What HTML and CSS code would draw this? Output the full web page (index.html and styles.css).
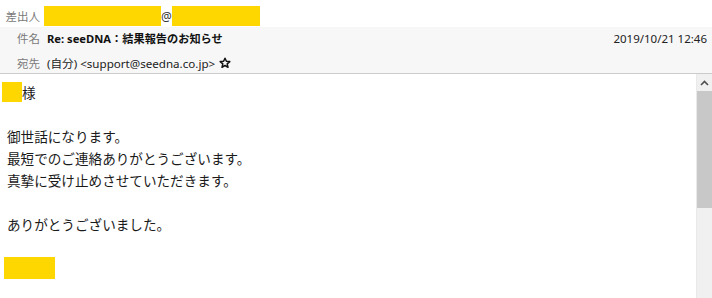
FILE: index.html
```html
<!DOCTYPE html>
<html lang="ja">
<head>
<meta charset="utf-8">
<link rel="stylesheet" href="styles.css">
</head>
<body>
<div class="header">
  <div class="row row-from">
    <span class="label label-from">差出人</span>
    <span class="redact redact-user"></span><span class="at">@</span><span class="redact redact-domain"></span>
  </div>
  <div class="gray">
    <div class="row row-subject">
      <span class="label">件名</span>
      <span class="subject">Re: seeDNA：結果報告のお知らせ</span>
      <span class="date">2019/10/21 12:46</span>
    </div>
    <div class="row row-to">
      <span class="label">宛先</span>
      <span class="to">(自分) &lt;support@seedna.co.jp&gt;</span>
      <svg class="star" width="12" height="12" viewBox="0 0 12 12"><path d="M6 1.2 L7.4 4.3 L10.8 4.6 L8.2 6.9 L9 10.3 L6 8.5 L3 10.3 L3.8 6.9 L1.2 4.6 L4.6 4.3 Z" fill="none" stroke="#111" stroke-width="1.5" stroke-linejoin="round"/></svg>
    </div>
  </div>
</div>
<div class="content">
  <div class="message">
    <div class="line line-name"><span class="redact redact-name"></span>様</div>
    <div class="line"></div>
    <div class="line">御世話になります。</div>
    <div class="line">最短でのご連絡ありがとうございます。</div>
    <div class="line">真摯に受け止めさせていただきます。</div>
    <div class="line"></div>
    <div class="line">ありがとうございました。</div>
    <div class="line"></div>
    <div class="line line-sign"><span class="redact redact-sign"></span></div>
  </div>
  <div class="scrollbar">
    <div class="sb-up"><svg width="9" height="6" viewBox="0 0 9 6"><path d="M1 5 L4.5 1.5 L8 5" fill="none" stroke="#505050" stroke-width="1.6"/></svg></div>
    <div class="sb-thumb"></div>
    <div class="sb-track"></div>
  </div>
</div>
</body>
</html>
```

FILE: styles.css
```css
html, body {
  margin: 0;
  padding: 0;
  background: #ffffff;
}
body {
  width: 712px;
  height: 298px;
  overflow: hidden;
  font-family: "Noto Sans", "Noto Sans CJK JP", sans-serif;
  color: #1a1a1a;
}
.header {
  border-bottom: 1px solid #cbcbcb;
}
.row {
  display: flex;
  align-items: center;
  font-size: 12px;
  white-space: nowrap;
}
.label {
  width: 40px;
  text-align: right;
  color: #7a7a7a;
  margin-right: 7px;
  font-family: "Noto Sans CJK JP", sans-serif;
  font-size: 11.5px;
}
.label-from {
  width: 40px;
  margin-right: 4px;
}
.row-from {
  height: 27px;
  padding-top: 5px;
  box-sizing: border-box;
}
.redact {
  display: inline-block;
  background: #ffd700;
}
.redact-user {
  width: 117px;
  height: 20px;
}
.at {
  width: 11px;
  text-align: center;
  font-size: 12px;
  color: #333;
}
.redact-domain {
  width: 88px;
  height: 20px;
}
.gray {
  background: #f7f7f7;
}
.row-subject {
  height: 23px;
  padding-bottom: 1px;
  box-sizing: border-box;
}
.subject {
  font-weight: bold;
  font-family: "Noto Sans", "Noto Sans CJK JP", sans-serif;
  font-size: 11.2px;
  color: #111;
  flex: 1;
}
.date {
  margin-right: 5px;
  font-size: 11.5px;
  color: #222;
}
.row-to {
  height: 23px;
  padding-top: 2px;
  box-sizing: border-box;
}
.to {
  color: #222;
  font-size: 11.6px;
}
.star {
  margin-left: 4px;
}
.content {
  display: flex;
  height: 224px;
}
.message {
  flex: 1;
  padding-top: 7px;
  font-family: "Noto Sans CJK JP", sans-serif;
  font-size: 13.6px;
  color: #1a1a1a;
}
.line {
  height: 22px;
  line-height: 22px;
  padding-left: 7px;
  white-space: nowrap;
}
.line-name {
  padding-left: 2px;
  display: flex;
  align-items: center;
}
.redact-name {
  width: 20px;
  height: 20px;
}
.line-sign {
  padding-left: 4px;
  display: flex;
  align-items: center;
}
.redact-sign {
  width: 51px;
  height: 22px;
}
.scrollbar {
  width: 15px;
  display: flex;
  flex-direction: column;
  background: #f0f0f0;
  border-left: 1px solid #e9e9e9;
}
.sb-up {
  height: 17px;
  display: flex;
  align-items: center;
  justify-content: center;
}
.sb-thumb {
  height: 117px;
  background: #c8c8c8;
}
.sb-track {
  flex: 1;
}
```
